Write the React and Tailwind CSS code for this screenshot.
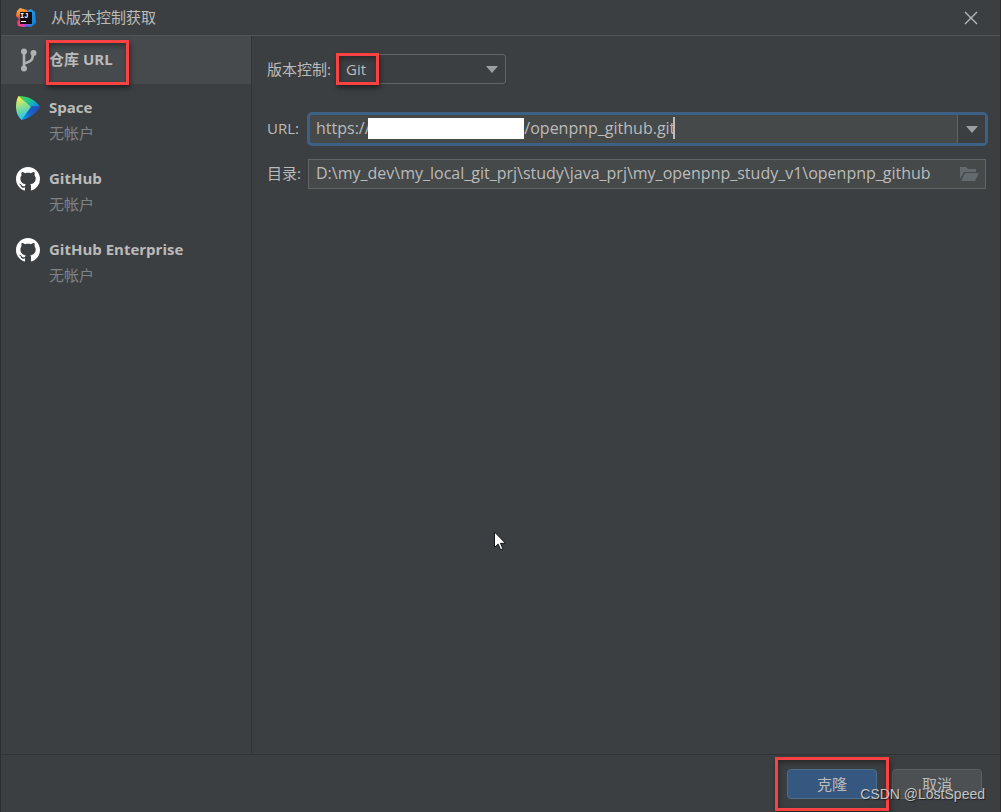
import React, { useState } from 'react';
import clsx from 'clsx';

const providers = [
  { id: 'url', title: '仓库 URL', icon: BranchIcon },
  { id: 'space', title: 'Space', status: '无帐户', icon: SpaceIcon },
  { id: 'github', title: 'GitHub', status: '无帐户', icon: GitHubIcon },
  { id: 'ghe', title: 'GitHub Enterprise', status: '无帐户', icon: GitHubIcon },
];

const host = '\u00a0'.repeat(37);

function IdeaIcon() {
  return (
    <svg viewBox="0 0 20 20" className="size-5 shrink-0" aria-hidden="true">
      <defs>
        <linearGradient id="idea-warm" x1="0.3" y1="0" x2="0.5" y2="1">
          <stop offset="0" stopColor="#fdb95a" />
          <stop offset="0.3" stopColor="#fc801d" />
          <stop offset="0.55" stopColor="#fe2d6b" />
          <stop offset="1" stopColor="#e9479b" />
        </linearGradient>
        <linearGradient id="idea-cool" x1="0" y1="0" x2="1" y2="1">
          <stop offset="0" stopColor="#3aa5e8" />
          <stop offset="1" stopColor="#0b7bd6" />
        </linearGradient>
      </defs>
      <path d="M10 3 15 1l4 3 1 11-5 4-7-1z" fill="url(#idea-cool)" />
      <path d="M1 3 4 0l7 2v15l-3 2-6-1-1-4 2-3-3-3z" fill="url(#idea-warm)" />
      <path d="M8 16h6l-2 2-4 1z" fill="#a14bd8" />
      <path d="M4 4h12v12H4z" fill="#120c10" />
      <text x="4" y="10" fill="#fff" fontSize="7" fontWeight="700" fontFamily="Liberation Mono, monospace">IJ</text>
      <path d="M5 13h5v1H5z" fill="#fff" />
    </svg>
  );
}

function BranchIcon() {
  return (
    <svg viewBox="0 0 24 24" className="size-6" aria-hidden="true">
      <g fill="none" stroke="#afb1b3" strokeWidth="2.6">
        <path d="M8 3v18" />
        <path d="M17 6c0 7-3.500 8-9 9.500" />
      </g>
      <g fill="#afb1b3">
        <circle cx="8" cy="3.500" r="3" />
        <circle cx="8" cy="20.500" r="3" />
        <circle cx="17.500" cy="5" r="3" />
      </g>
    </svg>
  );
}

function SpaceIcon() {
  return (
    <svg viewBox="0 0 24 24" className="size-6" aria-hidden="true">
      <defs>
        <linearGradient id="space-left" x1="0.3" y1="0" x2="0.5" y2="1">
          <stop offset="0" stopColor="#fff04a" />
          <stop offset="0.5" stopColor="#7edc9a" />
          <stop offset="1" stopColor="#12c5f0" />
        </linearGradient>
        <linearGradient id="space-top" x1="0" y1="0" x2="1" y2="0.8">
          <stop offset="0" stopColor="#4fd84a" />
          <stop offset="0.5" stopColor="#1fc98a" />
          <stop offset="1" stopColor="#0a8df0" />
        </linearGradient>
        <linearGradient id="space-bottom" x1="1" y1="0" x2="0" y2="1">
          <stop offset="0" stopColor="#2349b0" />
          <stop offset="0.5" stopColor="#1a62cc" />
          <stop offset="1" stopColor="#0aa6f5" />
        </linearGradient>
      </defs>
      <path d="M2.500 0C12 0 19 4 24 10.500L14.500 10.800z" fill="url(#space-top)" />
      <path d="M14.500 10.500 24 10.500c0 1-.3 1.600-1 2.300C18 19 11.500 23 5 24z" fill="url(#space-bottom)" />
      <path d="M2.500 0 15 10.800 5.500 24C2 21 0 16 0 10.500 0 6 1 2.500 2.500 0z" fill="url(#space-left)" />
    </svg>
  );
}

function GitHubIcon() {
  return (
    <svg viewBox="0 0 16 16" className="size-6" fill="#fff" aria-hidden="true">
      <path d="M8 0C3.580 0 0 3.580 0 8c0 3.540 2.290 6.530 5.470 7.590.4.070.55-.17.55-.38 0-.19-.01-.82-.01-1.490-2.010.37-2.530-.49-2.690-.94-.09-.23-.48-.94-.82-1.130-.28-.15-.68-.52-.01-.53.63-.01 1.080.58 1.230.82.72 1.210 1.870.87 2.330.66.07-.52.28-.87.51-1.070-1.780-.2-3.640-.89-3.640-3.950 0-.87.31-1.590.82-2.150-.08-.2-.36-1.020.08-2.120 0 0 .67-.21 2.200.82.64-.18 1.320-.27 2-.27s1.360.09 2 .27c1.530-1.040 2.200-.82 2.200-.82.44 1.100.16 1.920.08 2.120.51.56.82 1.270.82 2.150 0 3.070-1.870 3.750-3.650 3.950.29.25.54.73.54 1.480 0 1.070-.01 1.930-.01 2.200 0 .21.15.46.55.38A8.010 8.010 0 0 0 16 8c0-4.420-3.580-8-8-8z" />
    </svg>
  );
}

function Arrow() {
  return (
    <svg viewBox="0 0 12 7" className="h-[7px] w-3" aria-hidden="true">
      <path d="M0 0h12L6 7z" fill="#9c9fa1" />
    </svg>
  );
}

function FolderIcon() {
  return (
    <svg viewBox="0 0 19 14" className="h-[14px] w-[19px]" fill="#616a6e" aria-hidden="true">
      <path d="M0 0h6l2 2h8v3H4L0 12z" />
      <path d="M5 6h14l-4 8H1z" />
    </svg>
  );
}

// Red marker drawn over the part that needs attention
function Marker({ className }) {
  return (
    <span
      aria-hidden="true"
      className={clsx(
        'pointer-events-none absolute border-3 border-[#fb4243] shadow-[1px_3px_5px_rgba(0,0,0,0.5),inset_1px_3px_5px_rgba(0,0,0,0.35)]',
        className
      )}
    />
  );
}

function Provider({ item, active, onSelect }) {
  const Icon = item.icon;
  return (
    <li className="relative">
      <button
        type="button"
        onClick={() => onSelect(item.id)}
        className={clsx(
          'flex w-full items-start gap-[9px] pl-[15px] text-left',
          active ? 'bg-[#464a4c]' : 'bg-transparent',
          item.status ? 'pt-3 pb-[7px]' : 'py-3'
        )}
      >
        <Icon />
        <span className="flex flex-col">
          <span className="leading-[22px] font-bold">{item.title}</span>
          {item.status && <span className="leading-[30px] text-[#7f8284]">{item.status}</span>}
        </span>
      </button>
      {item.id === 'url' && <Marker className="top-1 left-[45px] h-[45px] w-[83px]" />}
    </li>
  );
}

export default function App() {
  const [selected, setSelected] = useState('url');
  const [url, setUrl] = useState(`https://${host}/openpnp_github.git`);
  const [directory, setDirectory] = useState(
    'D:\\my_dev\\my_local_git_prj\\study\\java_prj\\my_openpnp_study_v1\\openpnp_github'
  );

  return (
    <div className="relative flex min-h-screen flex-col border-x border-[#2b2d2e] bg-[#3c3f41] font-['Open_Sans','Noto_Sans_CJK_SC',sans-serif] text-[15px] text-[#bbbbbb]">
      <header className="flex h-9 items-center border-b border-[#515456] pr-[22px] pl-[15px]">
        <IdeaIcon />
        <h1 className="ml-[15px] flex-1">从版本控制获取</h1>
        <button type="button" aria-label="关闭">
          <svg viewBox="0 0 14 14" className="size-[14px]" stroke="#bbbbbb" strokeWidth="1.300" aria-hidden="true">
            <path d="M1 1l12 12M13 1 1 13" />
          </svg>
        </button>
      </header>

      <div className="flex flex-1">
        <nav className="w-[251px] shrink-0 border-r border-[#323436]">
          <ul>
            {providers.map((item) => (
              <Provider key={item.id} item={item} active={item.id === selected} onSelect={setSelected} />
            ))}
          </ul>
        </nav>

        <main className="relative flex min-w-0 flex-1 flex-col pt-[18px] pr-3 pl-[15px]">
          <div className="flex items-center">
            <label htmlFor="vcs" className="w-[71px]">版本控制:</label>
            <div className="relative w-[168px]">
              <select
                id="vcs"
                className="block h-[30px] w-full appearance-none rounded-[3px] border border-[#646464] bg-[#3c3f41] px-[7px] outline-none"
              >
                <option>Git</option>
                <option>Mercurial</option>
                <option>Subversion</option>
              </select>
              <span className="pointer-events-none absolute inset-y-0 right-2 flex items-center">
                <Arrow />
              </span>
              <Marker className="-top-px -left-[2px] h-8 w-[43px]" />
            </div>
          </div>

          <div className="mt-7 flex items-center">
            <label htmlFor="url" className="w-10 pb-[2px]">URL:</label>
            <div className="flex h-[34px] min-w-0 flex-1 rounded-[5px] border-3 border-[#3d6185] bg-[#45494a]">
              <div className="relative flex min-w-0 flex-1 items-center pb-[2px] pl-[6px]">
                <input
                  id="url"
                  type="text"
                  value={url}
                  onChange={(e) => setUrl(e.target.value)}
                  className="field-sizing-content min-w-0 bg-transparent text-base outline-none"
                />
                <span className="-ml-[2px] h-[22px] w-[2px] bg-[#bbbbbb]" />
                <span className="absolute left-[58px] h-[21px] w-[156px] bg-white" />
              </div>
              <button
                type="button"
                aria-label="历史记录"
                className="flex w-7 items-center justify-center border-l border-[#646464] bg-[#3c3f41]"
              >
                <Arrow />
              </button>
            </div>
          </div>

          <div className="mt-[13px] flex items-center">
            <label htmlFor="directory" className="w-[41px] pb-[2px]">目录:</label>
            <div className="mr-[2px] flex h-[30px] min-w-0 flex-1 items-center border border-[#646464] bg-[#45494a] pr-[6px] pl-[7px]">
              <input
                id="directory"
                type="text"
                value={directory}
                onChange={(e) => setDirectory(e.target.value)}
                className="min-w-0 flex-1 bg-transparent pb-[2px] text-base outline-none"
              />
              <button type="button" aria-label="浏览">
                <FolderIcon />
              </button>
            </div>
          </div>

          {/* Mouse pointer */}
          <svg viewBox="0 0 12 20" className="absolute top-[495px] left-[242px] h-5 w-3" aria-hidden="true">
            <path
              d="M.5 1v15.500l3.600-3.400 2.500 5.600 2.300-1-2.400-5.400h5z"
              fill="#fff"
              stroke="#14141c"
              strokeLinejoin="round"
            />
          </svg>
        </main>
      </div>

      <footer className="relative flex justify-end gap-[15px] border-t border-[#313335] pt-[14px] pr-[18px] pb-[13px]">
        <div className="relative">
          <button
            type="button"
            className="h-[30px] w-[90px] rounded-[4px] border border-[#4c708c] bg-[#365880]"
          >
            克隆
          </button>
          <Marker className="-top-3 -left-3 h-[54px] w-[114px]" />
        </div>
        <button
          type="button"
          className="h-[30px] w-[90px] rounded-[4px] border border-[#5e6060] bg-[#4c5052]"
        >
          取消
        </button>
        <span className="pointer-events-none absolute right-[15px] bottom-2 font-['Liberation_Sans',sans-serif] text-sm text-[#c4c5c6] [text-shadow:1px_1px_1px_rgba(0,0,0,0.6)]">
          CSDN @LostSpeed
        </span>
      </footer>
    </div>
  );
}
